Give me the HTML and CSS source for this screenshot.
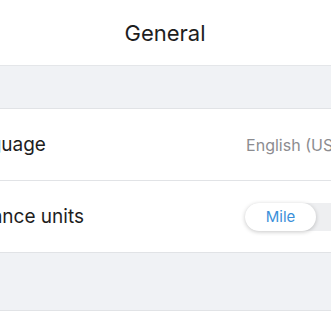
FILE: index.html
```html
<!DOCTYPE html>
<html lang="en">
<head>
  <meta charset="UTF-8">
  <meta name="viewport" content="width=device-width, initial-scale=1.0">
  <title>General</title>
  <link rel="stylesheet" href="styles.css">
</head>
<body>
  <div class="screen">
    <header class="top-bar">
      <h1>General</h1>
    </header>

    <div class="spacer"></div>

    <div class="row">
      <span class="label">Language</span>
      <span class="value">English (US)</span>
    </div>

    <div class="row">
      <span class="label">Distance units</span>
      <div class="segmented">
        <button class="seg active">Mile</button>
        <button class="seg">Km</button>
      </div>
    </div>

    <div class="spacer tall"></div>
  </div>
</body>
</html>
```

FILE: styles.css
```css
body {
  margin: 0;
  background: #fff;
  font-family: 'Inter', 'Noto Sans', sans-serif;
  overflow: hidden;
}

.screen {
  width: 460px;
  margin-left: -65px;
}

.top-bar {
  height: 65px;
  display: flex;
  align-items: center;
  justify-content: center;
  border-bottom: 1px solid #e4e6e9;
}

.top-bar h1 {
  margin: 0;
  font-size: 22px;
  font-weight: 400;
  color: #1e1e1e;
}

.spacer {
  height: 42px;
  background: #f0f2f5;
  border-bottom: 1px solid #e1e3e6;
}

.spacer.tall {
  height: 57px;
}

.row {
  height: 71px;
  padding: 0 22px;
  display: flex;
  align-items: center;
  justify-content: space-between;
  border-bottom: 1px solid #e1e3e6;
}

.label {
  font-size: 19px;
  color: #1e1e1e;
}

.value {
  font-size: 16px;
  color: #8c8c90;
  margin-right: 34px;
}

.segmented {
  display: flex;
  background: #eeeff1;
  border-radius: 14px;
  height: 28px;
}

.seg {
  border: none;
  background: transparent;
  font-family: inherit;
  font-size: 15px;
  color: #8c8c90;
  width: 57px;
  border-radius: 14px;
  padding: 0;
}

.seg.active {
  width: 71px;
  background: #fff;
  color: #3b8fd9;
  box-shadow: 0 1px 4px rgba(0, 0, 0, 0.22);
}
```
